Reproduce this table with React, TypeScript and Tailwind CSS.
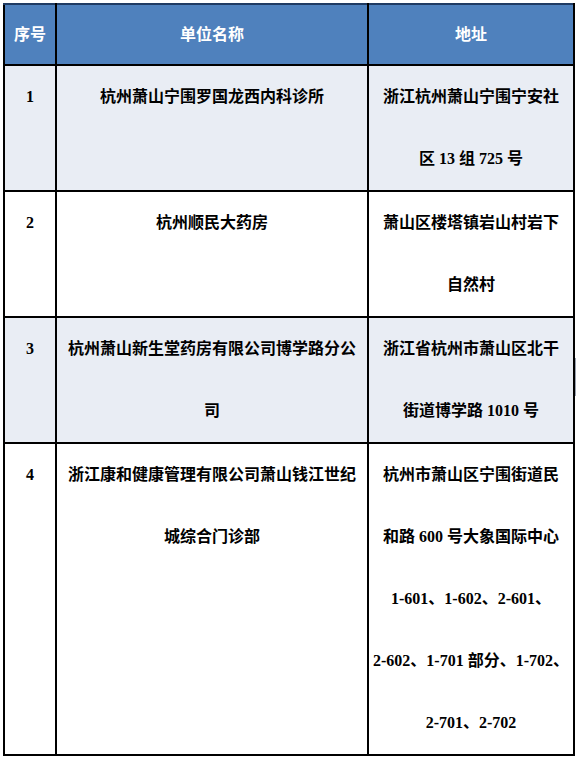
const rows = [
    {
        no: '1',
        name: ['杭州萧山宁围罗国龙西内科诊所'],
        addr: ['浙江杭州萧山宁围宁安社', '区 13 组 725 号'],
        shaded: true,
    },
    {
        no: '2',
        name: ['杭州顺民大药房'],
        addr: ['萧山区楼塔镇岩山村岩下', '自然村'],
        shaded: false,
    },
    {
        no: '3',
        name: ['杭州萧山新生堂药房有限公司博学路分公', '司'],
        addr: ['浙江省杭州市萧山区北干', '街道博学路 1010 号'],
        shaded: true,
    },
    {
        no: '4',
        name: ['浙江康和健康管理有限公司萧山钱江世纪', '城综合门诊部'],
        addr: [
            '杭州市萧山区宁围街道民',
            '和路 600 号大象国际中心',
            '1-601、1-602、2-601、',
            '2-602、1-701 部分、1-702、',
            '2-701、2-702',
        ],
        shaded: false,
    },
];

const font = { fontFamily: '"Liberation Serif", "Noto Sans CJK SC", serif' };

const Lines = ({ lines }: { lines: string[] }) => (
    <>
        {lines.map((l, i) => (
            <div key={i} className="whitespace-nowrap">{l}</div>
        ))}
    </>
);

export default function App() {
    return (
        <div className="min-h-screen bg-white pt-[3px] pl-[3px]" style={font}>
            <div className="flex items-start">
                <table className="w-[570px] table-fixed border-collapse text-[16px] font-bold text-black">
                    <colgroup>
                        <col className="w-[52px]" />
                        <col className="w-[312px]" />
                        <col className="w-[206px]" />
                    </colgroup>
                    <thead>
                        <tr className="h-[61px] bg-[#4f81bd] text-white">
                            <th className="border-2 border-black border-t-[#1f3b63] text-center font-bold">序号</th>
                            <th className="border-2 border-black border-t-[#1f3b63] text-center font-bold">单位名称</th>
                            <th className="border-2 border-black border-t-[#1f3b63] text-center font-bold">地址</th>
                        </tr>
                    </thead>
                    <tbody>
                        {rows.map((r) => (
                            <tr key={r.no} className={r.shaded ? 'bg-[#e9edf4]' : 'bg-white'}>
                                <td className="border-2 border-black p-0 text-center align-top leading-[62px]">{r.no}</td>
                                <td className="border-2 border-black p-0 text-center align-top leading-[62px]">
                                    <Lines lines={r.name} />
                                </td>
                                <td className="border-2 border-black p-0 text-center align-top leading-[62px]">
                                    <Lines lines={r.addr} />
                                </td>
                            </tr>
                        ))}
                    </tbody>
                </table>
                <div className="mt-[355px] h-[38px] w-[3px] shrink-0 border-y border-l border-gray-400"></div>
            </div>
        </div>
    );
}
